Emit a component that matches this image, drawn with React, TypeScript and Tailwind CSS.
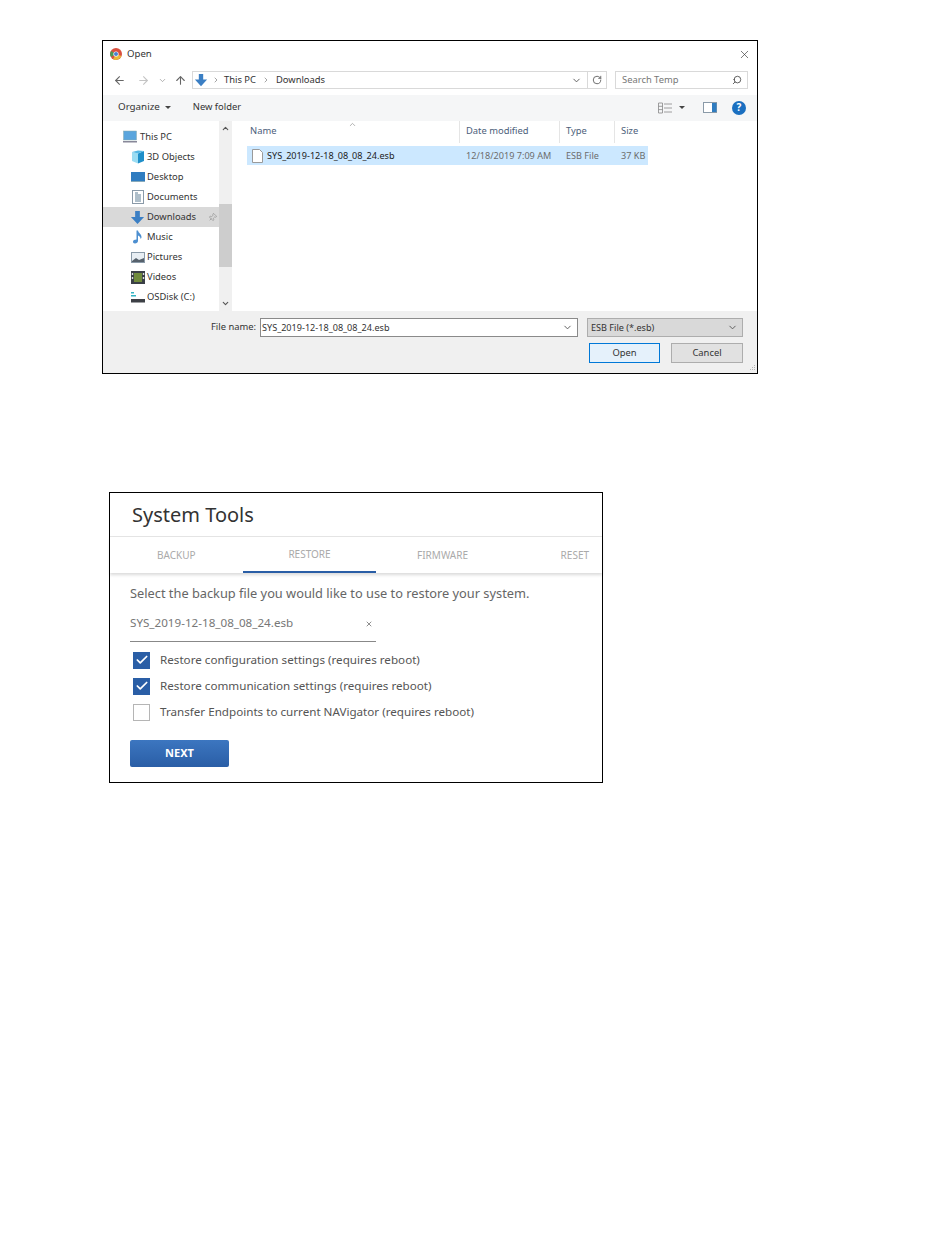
import React from 'react';
import { ArrowLeft, ArrowRight, ArrowUp, ChevronDown, ChevronUp, ChevronRight, RotateCw, Search, X, Check, Pin } from 'lucide-react';

const DownArrow = ({ size = 16 }: { size?: number }) => (
  <svg width={size} height={size} viewBox="0 0 16 16">
    <path d="M5.5 1h5v6.5H15L8 15 1 7.5h4.5z" fill="#3b7fc4" />
  </svg>
);

const ChromeIcon = () => (
  <svg width="12" height="12" viewBox="0 0 12 12">
    <circle cx="6" cy="6" r="6" fill="#d9503f" />
    <path d="M6 6 L1 9 A6 6 0 0 1 1 3 Z" fill="#4a9a55" />
    <path d="M6 6 L11.5 8 A6 6 0 0 1 3 11.2 Z" fill="#e8b93a" />
    <circle cx="6" cy="6" r="2.6" fill="#fff" />
    <circle cx="6" cy="6" r="2" fill="#4a80d0" />
  </svg>
);

const navItems = [
  { label: 'This PC', indent: 'pl-[20px]', icon: (
    <svg width="15" height="14" viewBox="0 0 15 14"><rect x="0.5" y="1" width="13" height="9" fill="#5aa5dd" stroke="#8aa" strokeWidth="0.5" /><rect x="0" y="11" width="14" height="1.5" fill="#889" /></svg>
  ) },
  { label: '3D Objects', indent: 'pl-[27px]', icon: (
    <svg width="14" height="14" viewBox="0 0 14 14"><path d="M7 3.5l6-2.5v10l-6 2.5z" fill="#1f8fc9" /><path d="M7 3.5L1 2v9l6 2.5z" fill="#9bdcf2" /><path d="M1 2l6-1.5L13 1 7 3.5z" fill="#56b8e4" /></svg>
  ) },
  { label: 'Desktop', indent: 'pl-[27px]', icon: (
    <svg width="14" height="12" viewBox="0 0 14 12"><rect x="0" y="1" width="14" height="9" fill="#2f7cc0" /><rect x="0" y="10" width="14" height="1" fill="#8ab" /></svg>
  ) },
  { label: 'Documents', indent: 'pl-[27px]', icon: (
    <svg width="12" height="14" viewBox="0 0 12 14"><rect x="0.5" y="0.5" width="11" height="13" fill="#fff" stroke="#8a9aa8" /><path d="M3 3h3M3 5h6M3 7h6M3 9h6M3 11h6" stroke="#5f7f95" strokeWidth="1" /></svg>
  ) },
  { label: 'Downloads', indent: 'pl-[27px]', active: true, icon: <DownArrow size={15} /> },
  { label: 'Music', indent: 'pl-[27px]', icon: (
    <svg width="14" height="14" viewBox="0 0 14 14"><path d="M5.5 0.5h1.5c.3 2.5 3.5 3.5 3.5 6.5 0 1-.5 1.5-1 2 .2-2-1.2-3-2.5-3.5V11c0 1.6-1.5 2.5-3 2.5S2 12.6 2 11.5 3.5 9.5 5.5 9.5z" fill="#4d8fd0" /></svg>
  ) },
  { label: 'Pictures', indent: 'pl-[27px]', icon: (
    <svg width="14" height="11" viewBox="0 0 14 11"><rect x="0.5" y="0.5" width="13" height="10" fill="#e8eef3" stroke="#8a9aa8" /><path d="M1 9l4-3 3 2 5-2v4H1z" fill="#56616c" /></svg>
  ) },
  { label: 'Videos', indent: 'pl-[27px]', icon: (
    <svg width="14" height="13" viewBox="0 0 14 13"><rect width="14" height="13" fill="#3a3f46" /><rect x="3" y="2" width="8" height="9" fill="#6f8a3c" /><rect x="0.8" y="2" width="1.4" height="2" fill="#ddd" /><rect x="0.8" y="6" width="1.4" height="2" fill="#ddd" /><rect x="11.8" y="2" width="1.4" height="2" fill="#ddd" /><rect x="11.8" y="6" width="1.4" height="2" fill="#ddd" /></svg>
  ) },
  { label: 'OSDisk (C:)', indent: 'pl-[27px]', icon: (
    <svg width="14" height="12" viewBox="0 0 14 12"><rect x="0" y="1" width="3" height="1.5" fill="#33b4c4" /><rect x="0" y="4" width="5" height="1.5" fill="#33b4c4" /><rect x="0" y="8" width="14" height="3.5" fill="#3d4046" /></svg>
  ) },
];

const OpenDialog = () => (
  <div className="w-[656px] h-[334px] border border-black bg-white flex flex-col text-[9.4px] text-[#333]">
    <div className="h-[26px] flex items-center justify-between pl-[7px] pr-[6px] shrink-0">
      <div className="flex items-center gap-[5px]">
        <ChromeIcon />
        <span className="text-[9.6px]">Open</span>
      </div>
      <X size={13} color="#333" strokeWidth={1.2} />
    </div>
    <div className="h-[28px] flex items-center pl-[10px] pr-[9px] pb-[2px] shrink-0">
      <ArrowLeft size={13} color="#666" className="mr-[11px]" />
      <ArrowRight size={13} color="#c4c4c4" className="mr-[8px]" />
      <ChevronDown size={9} color="#999" className="mr-[7px]" />
      <ArrowUp size={13} color="#666" className="mr-[5px]" />
      <div className="flex-1 h-[18px] border border-[#d9d9d9] flex items-center">
        <div className="ml-[1px] mr-[4px] flex"><DownArrow size={14} /></div>
        <ChevronRight size={8} color="#777" />
        <span className="ml-[4px] mr-[6px]">This PC</span>
        <ChevronRight size={8} color="#777" />
        <span className="ml-[6px]">Downloads</span>
        <div className="ml-auto flex items-center">
          <ChevronDown size={11} color="#555" className="mr-[5px]" />
          <div className="w-px h-[16px] bg-[#d9d9d9]" />
          <RotateCw size={10} color="#555" className="mx-[4px]" />
        </div>
      </div>
      <div className="w-[133px] h-[18px] border border-[#d9d9d9] ml-[8px] flex items-center justify-between pl-[6px] pr-[5px] text-[#777]">
        <span>Search Temp</span>
        <Search size={10} color="#444" className="-scale-x-100" />
      </div>
    </div>
    <div className="h-[26px] bg-[#f5f6f7] flex items-center pl-[15px] pr-[11px] pb-[1px] shrink-0">
      <span className="text-[9.8px]">Organize</span>
      <span className="ml-[5px] border-x-[3px] border-t-[3px] border-x-transparent border-t-[#444]" />
      <span className="ml-[22px]">New folder</span>
      <div className="ml-auto flex items-center">
        <svg width="14" height="12" viewBox="0 0 14 12"><path d="M0.5 1h4v10h-4zM0.5 4.3h4M0.5 7.6h4M6 2h8M6 6h8M6 10h8" fill="none" stroke="#888" strokeWidth="0.8" /></svg>
        <span className="ml-[7px] border-x-[3.5px] border-t-[3.5px] border-x-transparent border-t-[#444]" />
        <svg className="ml-[18px]" width="14" height="11" viewBox="0 0 14 11"><rect x="0.5" y="0.5" width="13" height="10" fill="#fff" stroke="#8a9aa8" /><rect x="9" y="1" width="4.5" height="9" fill="#2f7cc0" /></svg>
        <div className="ml-[15px] w-[14px] h-[14px] rounded-full bg-[#1a6fc0] text-white flex items-center justify-center font-bold text-[10px]">?</div>
      </div>
    </div>
    <div className="flex-1 flex min-h-0">
      <div className="w-[116px] pt-[6px] shrink-0">
        {navItems.map((item) => (
          <div key={item.label} className={`h-[20px] flex items-center ${item.indent} ${item.active ? 'bg-[#d9d9d9]' : ''}`}>
            <div className="w-[15px] flex justify-center mr-[2px] shrink-0">{item.icon}</div>
            <span>{item.label}</span>
            {item.active && <Pin size={9} color="#999" className="ml-auto mr-[2px] rotate-45" />}
          </div>
        ))}
      </div>
      <div className="w-[13px] bg-[#f0f0f0] flex flex-col items-center justify-between shrink-0 relative">
        <ChevronUp size={9} color="#555" strokeWidth={3} className="mt-[3px]" />
        <div className="absolute top-[83px] left-0 w-full h-[63px] bg-[#cdcdcd]" />
        <ChevronDown size={9} color="#555" strokeWidth={3} className="mb-[3px]" />
      </div>
      <div className="flex-1 pl-[15px] min-w-0 relative">
        <div className="h-[22px] flex text-[#4c607a]">
          <div className="w-[213px] pl-[3px] pb-[1px] relative h-full flex items-center border-r border-[#e5e5e5]">
            Name
            <ChevronUp size={9} color="#999" className="absolute left-[101px] -top-[1px]" />
          </div>
          <div className="w-[100px] pl-[6px] pb-[1px] h-full flex items-center border-r border-[#e5e5e5]">Date modified</div>
          <div className="w-[55px] pl-[6px] pb-[1px] h-full flex items-center border-r border-[#e5e5e5]">Type</div>
          <div className="pl-[6px] pb-[1px] flex items-center">Size</div>
        </div>
        <div className="w-[401px] h-[19px] mt-[3px] bg-[#cce8ff] flex items-center text-[9.1px]">
          <div className="w-[213px] pl-[5px] flex items-center">
            <svg width="11" height="14" viewBox="0 0 11 14"><path d="M0.5 0.5h7l3 3v10h-10z" fill="#fff" stroke="#9a9a9a" /></svg>
            <span className="ml-[4px] text-[#222]">SYS_2019-12-18_08_08_24.esb</span>
          </div>
          <div className="w-[100px] pl-[6px] text-[#6d6d6d] whitespace-nowrap">12/18/2019 7:09 AM</div>
          <div className="w-[55px] pl-[6px] text-[#6d6d6d]">ESB File</div>
          <div className="pl-[6px] text-[#6d6d6d]">37 KB</div>
        </div>
      </div>
    </div>
    <div className="h-[62px] bg-[#f0f0f0] shrink-0 flex flex-col pt-[7px] pl-[108px] relative">
      <div className="flex items-center h-[19px]">
        <span className="w-[45px] text-right whitespace-nowrap">File name:</span>
        <div className="ml-[4px] w-[318px] h-[19px] bg-white border border-[#8a8a8a] flex items-center justify-between pl-[1px] pr-[4px] text-[9.1px]">
          <span>SYS_2019-12-18_08_08_24.esb</span>
          <ChevronDown size={11} color="#555" />
        </div>
        <div className="ml-[9px] w-[156px] h-[19px] bg-[#d9d9d9] border border-[#adadad] flex items-center justify-between pl-[3px] pr-[4px] text-[9.1px]">
          <span>ESB File (*.esb)</span>
          <ChevronDown size={11} color="#555" />
        </div>
      </div>
      <div className="flex justify-end mt-[6px] mr-[14px]">
        <div className="w-[71px] h-[20px] bg-[#e5f1fb] border border-[#0078d7] flex items-center justify-center">Open</div>
        <div className="ml-[11px] w-[72px] h-[20px] bg-[#e1e1e1] border border-[#adadad] flex items-center justify-center">Cancel</div>
      </div>
      <svg className="absolute right-[1px] bottom-[1px]" width="8" height="8" viewBox="0 0 8 8"><path d="M6 1h1v1H6zM4 3h1v1H4zM6 3h1v1H6zM2 5h1v1H2zM4 5h1v1H4zM6 5h1v1H6z" fill="#b5b5b5" /></svg>
    </div>
  </div>
);

const CheckRow = ({ label, checked }: { label: string; checked: boolean }) => (
  <div className="h-[26px] flex items-center pl-[23px]">
    {checked ? (
      <div className="w-[17px] h-[17px] bg-[#2a5ea6] flex items-center justify-center">
        <Check size={14} color="#fff" strokeWidth={3} />
      </div>
    ) : (
      <div className="w-[17px] h-[17px] border border-[#b5b5b5] bg-white" />
    )}
    <span className="ml-[10px] text-[11.65px] text-[#555]">{label}</span>
  </div>
);

const SystemTools = () => (
  <div className="w-[494px] h-[291px] border border-black bg-white font-['Noto_Sans','Open_Sans',sans-serif]">
    <div className="h-[44px] flex items-center pl-[22px] border-b border-[#e6e6e6]">
      <h1 className="text-[20px] text-[#333]">System Tools</h1>
    </div>
    <div className="h-[36px] flex text-[10px] text-[#aaa] shadow-[0_2px_3px_rgba(0,0,0,0.15)] relative">
      <div className="w-[133px] flex items-center pl-[47px]">BACKUP</div>
      <div className="w-[133px] flex items-center justify-center border-b-2 border-[#2a5ea6]">RESTORE</div>
      <div className="w-[133px] flex items-center justify-center">FIRMWARE</div>
      <div className="flex-1 flex items-center justify-end pr-[13px]">RESET</div>
    </div>
    <div className="pl-[20px] pt-[11px]">
      <p className="text-[12.8px] text-[#666] leading-[18px]">Select the backup file you would like to use to restore your system.</p>
      <div className="w-[246px] h-[31px] mt-[9px] border-b border-[#888] flex items-start justify-between pt-[3px] text-[#777] text-[11.65px]">
        <span>SYS_2019-12-18_08_08_24.esb</span>
        <X size={8} color="#555" className="mt-[6px] mr-[3px]" />
      </div>
    </div>
    <div className="mt-[5px]">
      <CheckRow checked label="Restore configuration settings (requires reboot)" />
      <CheckRow checked label="Restore communication settings (requires reboot)" />
      <CheckRow checked={false} label="Transfer Endpoints to current NAVigator (requires reboot)" />
    </div>
    <div className="pl-[20px] mt-[14px]">
      <button className="w-[99px] h-[27px] rounded-[2px] bg-linear-to-b from-[#3c76c0] to-[#2a5ea6] text-white text-[11px] font-bold">NEXT</button>
    </div>
  </div>
);

export default function App() {
  return (
    <div className="w-[950px] h-[1260px] bg-white pt-[40px] font-['Noto_Sans','Open_Sans',sans-serif]">
      <div className="ml-[102px]">
        <OpenDialog />
      </div>
      <div className="ml-[109px] mt-[118px]">
        <SystemTools />
      </div>
    </div>
  );
}
